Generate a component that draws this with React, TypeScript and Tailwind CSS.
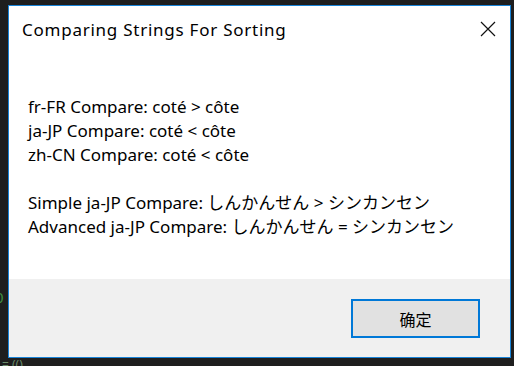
import React from "react";

const font = { fontFamily: '"Noto Sans", "Noto Sans CJK JP", sans-serif' };

export default function App() {
  return (
    <div className="w-[514px] h-[366px] bg-[#1e1e1e] pt-[5px] pl-[8px] overflow-hidden relative" style={font}>
      <div className="absolute left-[-5px] top-[290px] text-[#3f8f3f] text-[15px] leading-none">0</div>
      <div className="absolute left-[-4px] top-[312px] text-[#3f8f3f] text-[15px] leading-none">:</div>
      <div className="absolute left-[2px] top-[359px] text-[#6a8a6a] text-[12px] leading-none">= (()</div>
      <div className="w-[503px] h-[353px] border border-[#1883d7] bg-white flex flex-col relative">
        <div className="h-[46px] flex items-center justify-between pl-[13px] pr-[12px] text-[#000]">
          <span className="text-[17px] tracking-[0.75px] leading-none mt-[1px]">Comparing Strings For Sorting</span>
          <svg width="16" height="16" viewBox="0 0 16 16" className="mr-[2px]">
            <path d="M1 1 L15 15 M15 1 L1 15" stroke="#111" strokeWidth="1.2" fill="none" />
          </svg>
        </div>
        <div className="flex-1 pl-[19px] pt-[43px] text-[17px] leading-[24px] text-black">
          <div>fr-FR Compare: coté &gt; côte</div>
          <div>ja-JP Compare: coté &lt; côte</div>
          <div>zh-CN Compare: coté &lt; côte</div>
          <div>&nbsp;</div>
          <div>Simple ja-JP Compare: しんかんせん &gt; シンカンセン</div>
          <div>Advanced ja-JP Compare: しんかんせん = シンカンセン</div>
        </div>
        <div className="h-[78px] bg-[#f0f0f0] flex justify-end items-start pt-[20px] pr-[30px]">
          <button className="w-[129px] h-[39px] border-2 border-[#0078d7] bg-[#e1e1e1] text-[16px] text-black flex items-center justify-center" style={{ fontFamily: '"Noto Sans CJK SC", sans-serif' }}>
            确定
          </button>
        </div>
      </div>
    </div>
  );
}
